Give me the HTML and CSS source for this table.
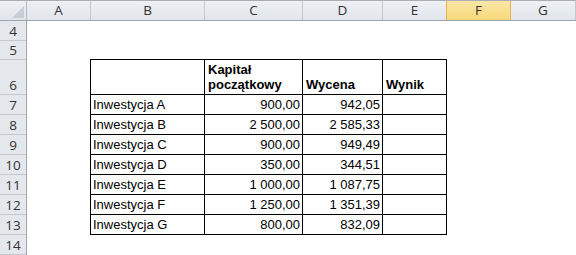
FILE: index.html
```html
<!DOCTYPE html>
<html>
<head>
<meta charset="utf-8">
<link rel="stylesheet" href="styles.css">
</head>
<body>
<div class="sheet">
  <div class="colheads">
    <div class="corner"><span class="tri"></span></div>
    <div class="ch w-a">A</div>
    <div class="ch w-b">B</div>
    <div class="ch w-c">C</div>
    <div class="ch w-d">D</div>
    <div class="ch w-e">E</div>
    <div class="ch w-f sel">F</div>
    <div class="ch w-g">G</div>
  </div>
  <div class="body">
    <div class="rowheads">
      <div class="rh h20">4</div>
      <div class="rh h19">5</div>
      <div class="rh h35">6</div>
      <div class="rh h20">7</div>
      <div class="rh h20">8</div>
      <div class="rh h20">9</div>
      <div class="rh h20">10</div>
      <div class="rh h20">11</div>
      <div class="rh h20">12</div>
      <div class="rh h20">13</div>
      <div class="rh h20">14</div>
    </div>
    <div class="cells">
      <div class="spacer"></div>
      <div class="tbl">
        <div class="c hd"></div>
        <div class="c hd b">Kapitał<br>początkowy</div>
        <div class="c hd b">Wycena</div>
        <div class="c hd b">Wynik</div>

        <div class="c">Inwestycja A</div><div class="c n">900,00</div><div class="c n">942,05</div><div class="c"></div>
        <div class="c">Inwestycja B</div><div class="c n">2 500,00</div><div class="c n">2 585,33</div><div class="c"></div>
        <div class="c">Inwestycja C</div><div class="c n">900,00</div><div class="c n">949,49</div><div class="c"></div>
        <div class="c">Inwestycja D</div><div class="c n">350,00</div><div class="c n">344,51</div><div class="c"></div>
        <div class="c">Inwestycja E</div><div class="c n">1 000,00</div><div class="c n">1 087,75</div><div class="c"></div>
        <div class="c">Inwestycja F</div><div class="c n">1 250,00</div><div class="c n">1 351,39</div><div class="c"></div>
        <div class="c">Inwestycja G</div><div class="c n">800,00</div><div class="c n">832,09</div><div class="c"></div>
      </div>
    </div>
  </div>
</div>
</body>
</html>
```
FILE: styles.css
```css
html, body {
  margin: 0;
  padding: 0;
  background: #ffffff;
}
.sheet {
  width: 576px;
  height: 255px;
  overflow: hidden;
  font-family: "Liberation Sans", Arial, sans-serif;
}
.colheads {
  display: flex;
  height: 21px;
  box-sizing: border-box;
  border-top: 1px solid #a9aeb5;
  border-bottom: 1px solid #9ea5ae;
  background: linear-gradient(#eef0f3, #e1e5ea);
}
.corner {
  width: 27px;
  flex: none;
  box-sizing: border-box;
  border-right: 1px solid #b4bac3;
  position: relative;
}
.tri {
  position: absolute;
  right: 2px;
  bottom: 2px;
  width: 0;
  height: 0;
  border-left: 12px solid transparent;
  border-bottom: 12px solid #c9cdd3;
}
.ch {
  flex: none;
  box-sizing: border-box;
  border-right: 1px solid #c3c8cf;
  text-align: center;
  font-family: "Open Sans", "Liberation Sans", sans-serif;
  font-size: 13.5px;
  line-height: 19px;
  color: #333333;
}
.w-a { width: 64px; }
.w-b { width: 114px; }
.w-c { width: 98px; }
.w-d { width: 80px; }
.w-e { width: 64px; }
.w-f { width: 64px; }
.w-g { width: 65px; }
.ch.sel {
  background: linear-gradient(#fbe6a6, #f8d87a);
  border-left: 1px solid #e2b45a;
  border-right: 1px solid #e2b45a;
  margin-left: -1px;
  width: 65px;
}
.body {
  display: flex;
}
.rowheads {
  width: 27px;
  flex: none;
  box-sizing: border-box;
  border-right: 1px solid #9ea5ae;
  background: #e4e7ec;
}
.rh {
  box-sizing: border-box;
  border-bottom: 1px solid #c3c8cf;
  display: flex;
  align-items: flex-end;
  justify-content: center;
  font-family: "Open Sans", "Liberation Sans", sans-serif;
  font-size: 13.5px;
  line-height: 16px;
  padding-bottom: 1px;
  color: #333333;
}
.h20 { height: 20px; }
.h19 { height: 19px; }
.h35 { height: 35px; }
.cells {
  flex: 1;
}
.spacer {
  height: 38px;
}
.tbl {
  margin-left: 63px;
  display: grid;
  grid-template-columns: 114px 98px 80px 64px;
  grid-template-rows: 35px repeat(7, 20px);
  width: max-content;
  border-left: 1px solid #000;
  border-top: 1px solid #000;
}
.c {
  box-sizing: border-box;
  border-right: 1px solid #000;
  border-bottom: 1px solid #000;
  font-size: 13px;
  line-height: 15px;
  color: #000;
  padding: 0 2px 2px 2px;
  display: flex;
  align-items: flex-end;
  white-space: nowrap;
}
.c.n {
  justify-content: flex-end;
}
.c.hd.b {
  font-weight: bold;
  padding-left: 3px;
}
```
